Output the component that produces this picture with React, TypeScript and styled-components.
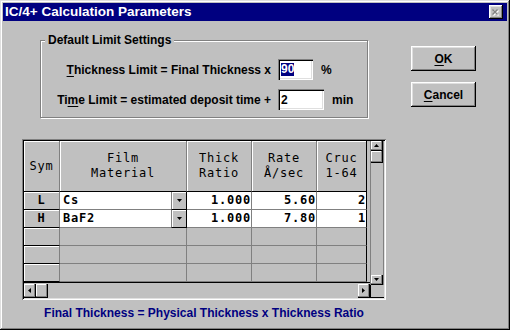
import React from "react";
import styled, { createGlobalStyle } from "styled-components";

const GlobalStyle = createGlobalStyle`
  html, body { margin: 0; padding: 0; background: #c0c0c0; }
  *, *::before, *::after { box-sizing: border-box; }
`;

const UI = `"Liberation Sans", Arial, sans-serif`;
const MONO = `"DejaVu Sans Mono", "Liberation Mono", monospace`;

const Window = styled.div`
  width: 510px;
  height: 330px;
  padding: 3px;
  display: flex;
  flex-direction: column;
  background: #c0c0c0;
  box-shadow: inset -1px -1px #000, inset 1px 1px #dfdfdf, inset -2px -2px #808080,
    inset 2px 2px #fff;
  font-family: ${UI};
  font-size: 12px;
  font-weight: bold;
  color: #000;
  overflow: hidden;
`;

const TitleBar = styled.div`
  height: 18px;
  flex: none;
  display: flex;
  align-items: center;
  justify-content: space-between;
  padding: 0 4px 0 2px;
  background: #000080;
  color: #fff;
  font-size: 13.5px;
  line-height: 18px;
`;

const CloseBox = styled.div`
  width: 14px;
  height: 14px;
  background: #c0c0c0;
  box-shadow: inset -1px -1px #000, inset 1px 1px #fff, inset -2px -2px #808080,
    inset 2px 2px #dfdfdf;
  display: flex;
  align-items: center;
  justify-content: center;
`;

const Client = styled.div`
  display: flex;
  flex-direction: column;
  align-items: flex-start;
  padding-left: 19px;
`;

const TopRow = styled.div`
  display: flex;
  align-items: flex-start;
`;

const GroupBox = styled.div`
  position: relative;
  width: 328px;
  height: 78px;
  margin: 19px 0 0 18px;
  padding-top: 18px;
  border: 1px solid #808080;
  box-shadow: 1px 1px 0 #fff, inset 1px 1px 0 #fff;
`;

const GroupLabel = styled.span`
  position: absolute;
  top: -8px;
  left: 4px;
  padding: 0 3px;
  background: #c0c0c0;
  line-height: 14px;
`;

const FormGrid = styled.div`
  display: grid;
  grid-template-columns: 230px auto;
  column-gap: 7px;
  row-gap: 9px;
  align-items: center;
`;

const FieldLabel = styled.span`
  justify-self: end;
  white-space: nowrap;
`;

const Control = styled.div`
  display: flex;
  align-items: center;
  gap: 8px;
`;

const TextBox = styled.div<{ $w: number }>`
  width: ${(p) => p.$w}px;
  height: 21px;
  background: #fff;
  box-shadow: inset 1px 1px #808080, inset 2px 2px #000, inset -1px -1px #fff,
    inset -2px -2px #dfdfdf;
  padding: 0 3px;
  display: flex;
  align-items: center;
`;

const Selected = styled.span`
  background: #000080;
  color: #fff;
  line-height: 13px;
`;

const Mn = styled.span`
  text-decoration: underline;
  text-underline-offset: 2px;
`;

const ButtonCol = styled.div`
  display: flex;
  flex-direction: column;
  gap: 11px;
  margin: 25px 0 0 43px;
`;

const Button = styled.div`
  width: 65px;
  height: 25px;
  display: flex;
  align-items: center;
  justify-content: center;
  box-shadow: inset -1px -1px #000, inset 1px 1px #fff, inset -2px -2px #808080,
    inset 2px 2px #dfdfdf;
`;

const GridFrame = styled.div`
  margin-top: 21px;
  width: 364px;
  height: 161px;
  padding: 2px;
  box-shadow: inset 1px 1px #808080, inset -1px -1px #fff, inset 2px 2px #000,
    inset -2px -2px #dfdfdf;
  display: grid;
  grid-template-columns: 346px 14px;
  grid-template-rows: 142px 2px 13px;
`;

const Table = styled.div`
  grid-column: 1;
  grid-row: 1;
  display: grid;
  grid-template-columns: 36px 127px 65px 65px 50px;
  grid-template-rows: 51px repeat(5, 18px);
  align-content: start;
  border-bottom: 1px solid #000;
  font-family: ${MONO};
  font-size: 12px;
  letter-spacing: 0.8px;
`;

const HeadCell = styled.div<{ $last?: boolean }>`
  display: flex;
  align-items: center;
  justify-content: center;
  text-align: center;
  white-space: pre-line;
  line-height: 15px;
  font-weight: normal;
  border-right: 1px solid ${(p) => (p.$last ? "#000" : "#808080")};
  border-bottom: 1px solid #000;
  box-shadow: inset 1px 1px #fff;
`;

const RowHead = styled.div`
  display: flex;
  align-items: center;
  justify-content: center;
  line-height: 17px;
  border-right: 1px solid #808080;
  border-bottom: 1px solid #000;
  box-shadow: inset 1px 1px #fff;
`;

const DataCell = styled.div<{ $blank?: boolean; $last?: boolean }>`
  background: ${(p) => (p.$blank ? "#c0c0c0" : "#fff")};
  border-right: 1px solid ${(p) => (p.$last ? "#000" : "#808080")};
  border-bottom: 1px solid #808080;
  text-align: right;
  line-height: 17px;
  white-space: nowrap;
`;

const FilmCell = styled.div`
  display: flex;
  line-height: 17px;
`;

const FilmName = styled.span`
  flex: 1;
  padding-left: 3px;
  background: #fff;
  border-bottom: 1px solid #808080;
`;

const DropButton = styled.div`
  width: 16px;
  flex: none;
  display: flex;
  align-items: center;
  justify-content: center;
  background: #c0c0c0;
  border-left: 1px solid #808080;
  border-right: 1px solid #000;
  border-bottom: 1px solid #000;
  box-shadow: inset 1px 1px #fff;
`;

const VScroll = styled.div`
  grid-column: 2;
  grid-row: 1 / 3;
  display: flex;
  flex-direction: column;
  border-left: 1px solid #808080;
  border-right: 1px solid #808080;
  background: #c0c0c0;
`;

const HScroll = styled.div`
  grid-column: 1;
  grid-row: 2 / 4;
  display: flex;
  padding-top: 1px;
  background: #c0c0c0;
`;

const Corner = styled.div`
  grid-column: 2;
  grid-row: 3;
  border-left: 1px solid #000;
  border-bottom: 1px solid #000;
`;

const ArrowBtn = styled.div<{ $w: number; $h: number }>`
  width: ${(p) => p.$w}px;
  height: ${(p) => p.$h}px;
  flex: none;
  display: flex;
  align-items: center;
  justify-content: center;
  background: #c0c0c0;
  box-shadow: inset -1px -1px #808080, inset 1px 1px #fff;
  border-right: 1px solid #000;
  border-bottom: 1px solid #000;
`;

const Track = styled.div`
  flex: 1;
`;

const Footer = styled.div`
  width: 364px;
  margin-top: 6px;
  text-align: center;
  color: #000080;
  line-height: 14px;
`;

const Tri = ({ dir }: { dir: "up" | "down" | "left" | "right" }) => {
  const pts = {
    up: "0,3 5,3 2.5,0",
    down: "0,0 5,0 2.5,3",
    left: "3,0 3,5 0,2.5",
    right: "0,0 0,5 3,2.5",
  }[dir];
  const w = dir === "up" || dir === "down" ? 5 : 3;
  const h = dir === "up" || dir === "down" ? 3 : 5;
  return (
    <svg width={w} height={h} viewBox={`0 0 ${w} ${h}`}>
      <polygon points={pts} fill="#000" />
    </svg>
  );
};

const rows = [
  { sym: "L", name: "Cs", ratio: "1.000", rate: "5.60", cruc: "2" },
  { sym: "H", name: "BaF2", ratio: "1.000", rate: "7.80", cruc: "1" },
];

export default function App() {
  return (
    <>
      <GlobalStyle />
      <Window>
        <TitleBar>
          <span>IC/4+ Calculation Parameters</span>
          <CloseBox>
            <svg width="8" height="7" viewBox="0 0 8 7">
              <path d="M1.5 1.5 L6.5 6.5 M6.5 1.5 L1.5 6.5" stroke="#fff" strokeWidth="1.3" />
              <path d="M0.5 0.5 L5.5 5.5 M5.5 0.5 L0.5 5.5" stroke="#808080" strokeWidth="1.3" />
            </svg>
          </CloseBox>
        </TitleBar>
        <Client>
          <TopRow>
            <GroupBox>
              <GroupLabel>Default Limit Settings</GroupLabel>
              <FormGrid>
                <FieldLabel>
                  <Mn>T</Mn>hickness Limit = Final Thickness x
                </FieldLabel>
                <Control>
                  <TextBox $w={35}>
                    <Selected>90</Selected>
                  </TextBox>
                  <span>%</span>
                </Control>
                <FieldLabel>
                  Ti<Mn>m</Mn>e Limit = estimated deposit time +
                </FieldLabel>
                <Control>
                  <TextBox $w={46}>2</TextBox>
                  <span>min</span>
                </Control>
              </FormGrid>
            </GroupBox>
            <ButtonCol>
              <Button>
                <span>
                  <Mn>O</Mn>K
                </span>
              </Button>
              <Button>
                <span>
                  <Mn>C</Mn>ancel
                </span>
              </Button>
            </ButtonCol>
          </TopRow>
          <GridFrame>
            <Table>
              <HeadCell>Sym</HeadCell>
              <HeadCell>{"Film\nMaterial"}</HeadCell>
              <HeadCell>{"Thick\nRatio"}</HeadCell>
              <HeadCell>{"Rate\nÅ/sec"}</HeadCell>
              <HeadCell $last>{"Cruc\n1-64"}</HeadCell>
              {rows.map((r) => (
                <React.Fragment key={r.sym}>
                  <RowHead>{r.sym}</RowHead>
                  <FilmCell>
                    <FilmName>{r.name}</FilmName>
                    <DropButton>
                      <Tri dir="down" />
                    </DropButton>
                  </FilmCell>
                  <DataCell>{r.ratio}</DataCell>
                  <DataCell>{r.rate}</DataCell>
                  <DataCell $last>{r.cruc}</DataCell>
                </React.Fragment>
              ))}
              {[0, 1, 2].map((i) => (
                <React.Fragment key={i}>
                  <RowHead />
                  <DataCell $blank />
                  <DataCell $blank />
                  <DataCell $blank />
                  <DataCell $blank $last />
                </React.Fragment>
              ))}
            </Table>
            <VScroll>
              <ArrowBtn $w={12} $h={10}>
                <Tri dir="up" />
              </ArrowBtn>
              <ArrowBtn $w={12} $h={12} />
              <Track />
              <ArrowBtn $w={12} $h={10}>
                <Tri dir="down" />
              </ArrowBtn>
            </VScroll>
            <HScroll>
              <ArrowBtn $w={12} $h={14}>
                <Tri dir="left" />
              </ArrowBtn>
              <ArrowBtn $w={12} $h={14} />
              <Track />
              <ArrowBtn $w={12} $h={14}>
                <Tri dir="right" />
              </ArrowBtn>
            </HScroll>
            <Corner />
          </GridFrame>
          <Footer>Final Thickness = Physical Thickness x Thickness Ratio</Footer>
        </Client>
      </Window>
    </>
  );
}
